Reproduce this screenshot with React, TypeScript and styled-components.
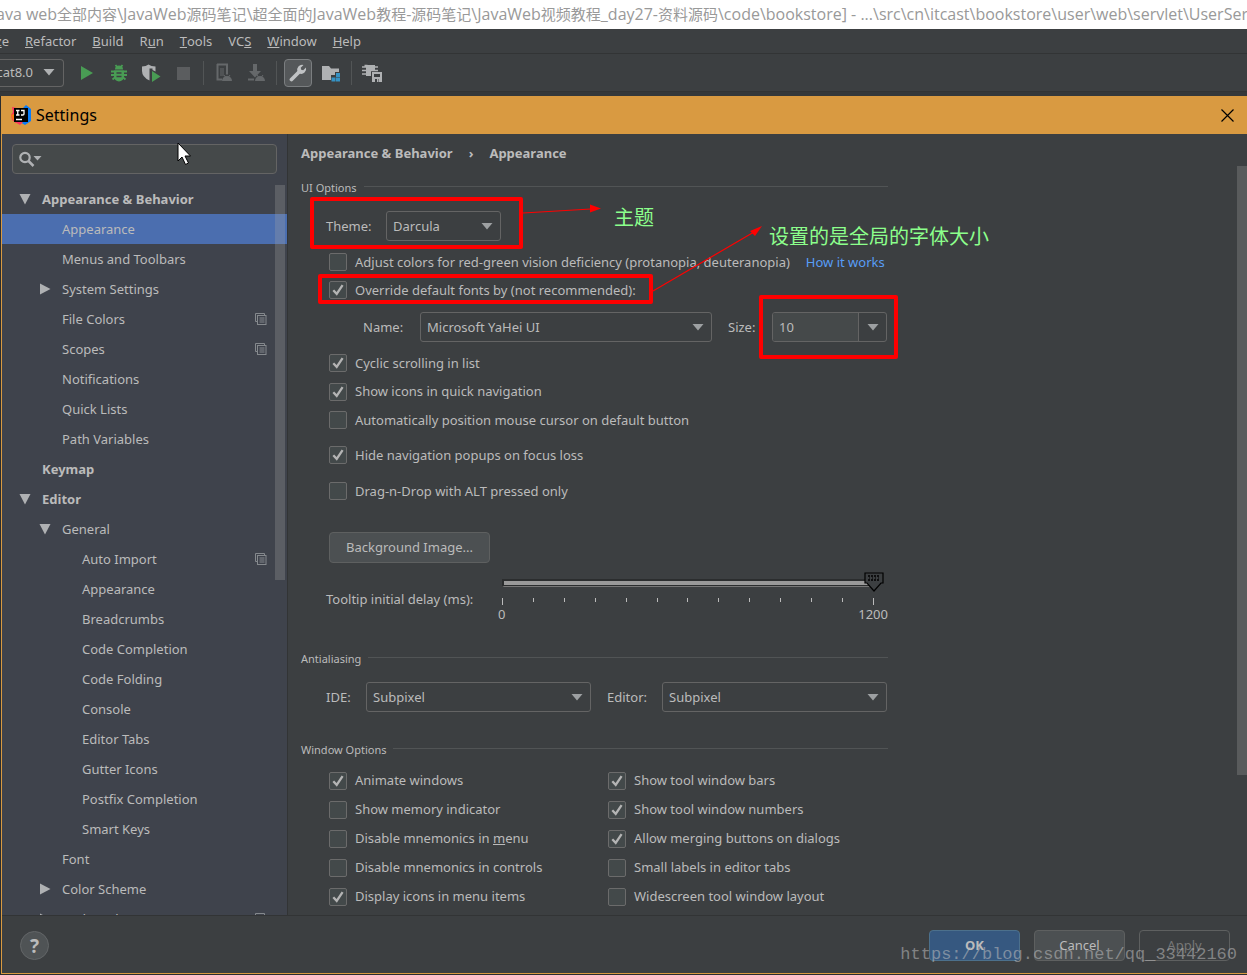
import React, { useState } from 'react';
import styled, { createGlobalStyle, css } from 'styled-components';

const c = {
  panel: '#3c3f41',
  side: '#3f434c',
  line: '#323435',
  text: '#bbbbbb',
  border: '#646464',
  field: '#45494a',
  select: '#4b6eaf',
  orange: '#d99a41',
  icon: '#afb1b3',
  dim: '#5b5d5f',
  green: '#499c54',
};

const Global = createGlobalStyle`
  * { box-sizing: border-box; }
  html, body { margin: 0; padding: 0; background: #2b2d2e; }
  body, button, input, select {
    font-family: "Noto Sans", "Noto Sans CJK SC", sans-serif;
    font-size: 13px;
    line-height: 19px;
    color: ${c.text};
  }
`;

const Screen = styled.div`
  position: relative;
  display: flex;
  flex-direction: column;
  height: 100vh;
  overflow: hidden;
`;

const WindowTitle = styled.div`
  flex: none;
  height: 29px;
  overflow: hidden;
  background: #fff;
  color: #999;
  font-family: "Open Sans", "Noto Sans CJK SC", sans-serif;
  font-size: 16px;
  line-height: 29px;
  text-indent: -4px;
  white-space: nowrap;
`;

const Han = styled.span`
  font-size: 15px;
`;

const MenuBar = styled.nav`
  flex: none;
  display: flex;
  align-items: center;
  gap: 16px;
  height: 24px;
  background: ${c.panel};
`;

const MenuItem = styled.button<{ $cut?: boolean }>`
  display: flex;
  padding: 0;
  border: 0;
  background: none;
  ${p => p.$cut && css`
    width: 9px;
    justify-content: flex-end;
    overflow: hidden;
  `}
`;

const ToolBar = styled.div`
  flex: none;
  display: flex;
  align-items: center;
  height: 39px;
  border-top: 1px solid ${c.line};
  border-bottom: 1px solid ${c.line};
  background: ${c.panel};
`;

const RunConfig = styled.button`
  display: flex;
  align-items: center;
  justify-content: flex-end;
  gap: 10px;
  width: 64px;
  height: 28px;
  margin-right: 7px;
  padding: 0 8px 0 0;
  border: 1px solid ${c.border};
  border-left: 0;
  border-radius: 0 4px 4px 0;
  background: none;
  overflow: hidden;
  svg { flex: none; }
`;

const Tool = styled.button<{ $on?: boolean }>`
  display: grid;
  place-items: center;
  flex: none;
  width: ${p => (p.$on ? 28 : 20)}px;
  height: 28px;
  margin: 0 ${p => (p.$on ? 3 : 6)}px;
  padding: 0;
  border: ${p => (p.$on ? '1px solid #7b7e80' : '0')};
  border-radius: 4px;
  background: ${p => (p.$on ? '#55585a' : 'none')};
`;

const Separator = styled.span`
  flex: none;
  width: 1px;
  height: 24px;
  margin: 0 4px;
  background: #525556;
`;

const TabStrip = styled.div`
  flex: none;
  height: 4px;
  background: #35383a;
`;

const Dialog = styled.section`
  position: relative;
  flex: 1;
  min-height: 0;
  display: flex;
  flex-direction: column;
  margin: 0 0 1px 1px;
  border: solid ${c.orange};
  border-width: 0 0 1px 1px;
  background: ${c.panel};
`;

const DialogTitle = styled.header`
  flex: none;
  display: flex;
  align-items: center;
  gap: 4px;
  height: 38px;
  padding: 0 13px 0 9px;
  background: ${c.orange};
  color: #000;
`;

const DialogName = styled.h1`
  flex: 1;
  margin: 0;
  font-size: 16px;
  line-height: 24px;
  font-weight: 400;
`;

const PlainButton = styled.button`
  display: grid;
  place-items: center;
  padding: 0;
  border: 0;
  background: none;
`;

const DialogBody = styled.div`
  flex: 1;
  min-height: 0;
  display: flex;
`;

const Sidebar = styled.aside`
  position: relative;
  flex: none;
  display: flex;
  flex-direction: column;
  width: 286px;
  overflow: hidden;
  border-right: 1px solid ${c.line};
  background: ${c.side};
`;

const Search = styled.label`
  flex: none;
  display: flex;
  align-items: center;
  height: 30px;
  margin: 10px;
  padding: 0 6px;
  border: 1px solid ${c.border};
  border-radius: 4px;
  background: ${c.field};
`;

const SearchInput = styled.input`
  flex: 1;
  min-width: 0;
  border: 0;
  outline: 0;
  background: none;
`;

const Tree = styled.ul`
  position: relative;
  flex: 1;
  min-height: 0;
  margin: 0;
  padding: 0;
  overflow: hidden;
  list-style: none;
`;

const TreeRow = styled.li<{ $level: number; $selected?: boolean; $bold?: boolean }>`
  display: flex;
  align-items: center;
  height: 30px;
  padding: 0 20px 0 ${p => 15 + p.$level * 20}px;
  background: ${p => (p.$selected ? c.select : 'none')};
  font-weight: ${p => (p.$bold ? 700 : 400)};
`;

const Twisty = styled.span`
  display: flex;
  width: 25px;
  padding-left: 2px;
`;

const TreeLabel = styled.span`
  flex: 1;
`;

const ScrollThumb = styled.span<{ $top: number; $height: number; $right: number }>`
  position: absolute;
  top: ${p => p.$top}px;
  right: ${p => p.$right}px;
  width: 10px;
  height: ${p => p.$height}%;
  background: rgba(166, 166, 166, 0.28);
`;

const Content = styled.main`
  position: relative;
  flex: 1;
  min-width: 0;
  overflow: hidden;
  padding-left: 13px;
`;

const Form = styled.div`
  max-width: 587px;
`;

const Breadcrumb = styled.div`
  display: flex;
  align-items: center;
  gap: 16px;
  height: 38px;
  font-weight: 700;
`;

const SectionTitle = styled.h2<{ $gap: number }>`
  display: flex;
  align-items: center;
  gap: 7px;
  margin: ${p => p.$gap}px 0 0;
  font-size: 11px;
  line-height: 20px;
  font-weight: 400;
  &::after {
    content: "";
    flex: 1;
    height: 1px;
    margin-bottom: 3px;
    background: #515455;
  }
`;

const Row = styled.div<{ $gap?: number; $indent?: number }>`
  display: flex;
  align-items: center;
  margin-top: ${p => p.$gap ?? 0}px;
  padding-left: ${p => p.$indent ?? 25}px;
`;

const FieldLabel = styled.label<{ $width: number }>`
  flex: none;
  width: ${p => p.$width}px;
  white-space: nowrap;
`;

const SelectBox = styled.span<{ $width: number }>`
  position: relative;
  flex: none;
  width: ${p => p.$width}px;
  svg {
    position: absolute;
    top: 12px;
    right: 8px;
    pointer-events: none;
  }
`;

const NativeSelect = styled.select`
  display: block;
  width: 100%;
  height: 30px;
  padding: 0 6px;
  appearance: none;
  border: 1px solid ${c.border};
  border-radius: 3px;
  background: ${c.panel};
`;

const SizeBox = styled.span`
  display: flex;
  width: 115px;
  height: 30px;
  border: 1px solid ${c.border};
  border-radius: 3px;
  overflow: hidden;
`;

const SizeInput = styled.input`
  flex: 1;
  min-width: 0;
  padding: 0 6px;
  border: 0;
  outline: 0;
  background: ${c.field};
`;

const SizeButton = styled(PlainButton)`
  width: 28px;
  border-left: 1px solid ${c.border};
`;

const CheckLabel = styled.label<{ $gap?: number; $tall?: boolean }>`
  display: flex;
  align-items: center;
  gap: 8px;
  height: ${p => (p.$tall ? 29 : 28)}px;
  margin-top: ${p => p.$gap ?? 0}px;
  white-space: nowrap;
`;

const CheckCell = styled.span`
  display: grid;
  place-items: center;
  flex: none;
  > * { grid-area: 1 / 1; }
  svg { pointer-events: none; }
`;

const CheckInput = styled.input`
  appearance: none;
  width: 18px;
  height: 18px;
  margin: 0;
  border: 1px solid #6b6b6b;
  border-radius: 2px;
  background: #43494a;
`;

const Checks = styled.div`
  padding-left: 28px;
`;

const CheckGrid = styled.div`
  display: grid;
  grid-template-columns: 279px 1fr;
  margin-top: 6px;
  padding-left: 28px;
`;

const Link = styled.a`
  margin-left: 16px;
  color: #589df6;
  text-decoration: none;
  white-space: nowrap;
`;

const PushButton = styled.button<{ $kind?: 'primary' | 'disabled'; $wide?: boolean }>`
  flex: none;
  width: ${p => (p.$wide ? 161 : 91)}px;
  height: 31px;
  padding: 0;
  border: 1px solid #5e6060;
  border-radius: 4px;
  background: #4c5052;
  ${p => p.$kind === 'primary' && css`
    border-color: #4c708c;
    background: #365880;
    font-weight: 700;
  `}
  ${p => p.$kind === 'disabled' && css`
    background: none;
    color: #777;
  `}
`;

const SliderBox = styled.div`
  position: relative;
  flex: 1;
  height: 58px;
  padding: 9px 14px 0 0;
`;

const Track = styled.div`
  height: 8px;
  border: 2px solid #2b2d2e;
  border-right: 0;
  border-bottom: 1px solid #777;
  background: #999;
  box-shadow: inset 0 -1px 0 #2b2d2e;
`;

const Thumb = styled.svg`
  position: absolute;
  top: 2px;
  right: 4px;
`;

const Range = styled.input`
  position: absolute;
  top: 0;
  left: 0;
  width: 100%;
  height: 22px;
  margin: 0;
  opacity: 0;
`;

const Ticks = styled.div`
  display: flex;
  justify-content: space-between;
  margin-top: 11px;
  height: 7px;
`;

const Tick = styled.span<{ $major: boolean }>`
  width: 1px;
  height: ${p => (p.$major ? 7 : 4)}px;
  background: #bbb;
`;

const Scale = styled.div`
  display: flex;
  justify-content: space-between;
  margin: 0 -14px 0 -4px;
`;

const Footer = styled.footer`
  flex: none;
  display: flex;
  align-items: center;
  gap: 14px;
  height: 58px;
  padding: 2px 17px 0 18px;
  border-top: 1px solid ${c.line};
`;

const Help = styled.button`
  width: 29px;
  height: 29px;
  margin-right: auto;
  padding: 0;
  border: 1px solid #636668;
  border-radius: 50%;
  background: #4f5355;
  font-size: 19px;
  line-height: 24px;
  font-weight: 700;
`;

const Marks = styled.svg`
  position: absolute;
  top: 0;
  left: 0;
  pointer-events: none;
`;

const Note = styled.span<{ $x: number; $y: number }>`
  position: absolute;
  left: ${p => p.$x}px;
  top: ${p => p.$y}px;
  color: #8cff8c;
  font-family: "Noto Sans CJK SC", sans-serif;
  font-size: 20px;
  line-height: 28px;
  white-space: nowrap;
`;

const Pointer = styled.svg`
  position: absolute;
  top: 8px;
  left: 175px;
  pointer-events: none;
`;

const Watermark = styled.span`
  position: absolute;
  right: 10px;
  bottom: 8px;
  color: rgba(190, 190, 190, 0.55);
  font-family: "Liberation Mono", monospace;
  font-size: 17px;
  line-height: 24px;
  pointer-events: none;
`;

const Down = ({ fill = '#9da0a2' }: { fill?: string }) => (
  <svg width="12" height="7" viewBox="0 0 12 7"><path d="M0.5 0h11L6 6.5z" fill={fill} /></svg>
);

const TwistyIcon = ({ open }: { open: boolean }) => (
  <svg width="12" height="12" viewBox="0 0 12 12">
    <path d={open ? 'M0.500 1h11L6 11.500z' : 'M1 0.500v11L11.500 6z'} fill="#afb1b3" />
  </svg>
);

const CopyIcon = () => (
  <svg width="12" height="12" viewBox="0 0 12 12" fill="none" stroke="#85898d">
    <path d="M9.500 2.500V0.500H0.500v8h2" />
    <rect x="2.500" y="2.500" width="8.500" height="9" />
    <path d="M4.500 5h5M4.500 7h5M4.500 9h5" />
  </svg>
);

const Combo = ({ id, value, width }: { id: string; value: string; width: number }) => (
  <SelectBox $width={width}>
    <NativeSelect id={id} defaultValue={value}><option>{value}</option></NativeSelect>
    <Down />
  </SelectBox>
);

type CheckProps = { label: React.ReactNode; on?: boolean; gap?: number; tall?: boolean };
const Check = ({ label, on = false, gap, tall }: CheckProps) => {
  const [checked, setChecked] = useState(on);
  return (
    <CheckLabel $gap={gap} $tall={tall}>
      <CheckCell>
        <CheckInput type="checkbox" checked={checked} onChange={e => setChecked(e.target.checked)} />
        {checked && (
          <svg width="12" height="12" viewBox="0 0 12 12">
            <path d="M1.300 6.200L4.700 9.800L10.600 1.200" fill="none" stroke="#b4b4b4" strokeWidth="2.300" />
          </svg>
        )}
      </CheckCell>
      <span>{label}</span>
    </CheckLabel>
  );
};

type Node = { name: string; level: number; open?: boolean; bold?: boolean; copy?: boolean; selected?: boolean };
const nodes: Node[] = [
  { name: 'Appearance & Behavior', level: 0, open: true, bold: true },
  { name: 'Appearance', level: 1, selected: true },
  { name: 'Menus and Toolbars', level: 1 },
  { name: 'System Settings', level: 1, open: false },
  { name: 'File Colors', level: 1, copy: true },
  { name: 'Scopes', level: 1, copy: true },
  { name: 'Notifications', level: 1 },
  { name: 'Quick Lists', level: 1 },
  { name: 'Path Variables', level: 1 },
  { name: 'Keymap', level: 0, bold: true },
  { name: 'Editor', level: 0, open: true, bold: true },
  { name: 'General', level: 1, open: true },
  { name: 'Auto Import', level: 2, copy: true },
  { name: 'Appearance', level: 2 },
  { name: 'Breadcrumbs', level: 2 },
  { name: 'Code Completion', level: 2 },
  { name: 'Code Folding', level: 2 },
  { name: 'Console', level: 2 },
  { name: 'Editor Tabs', level: 2 },
  { name: 'Gutter Icons', level: 2 },
  { name: 'Postfix Completion', level: 2 },
  { name: 'Smart Keys', level: 2 },
  { name: 'Font', level: 1 },
  { name: 'Color Scheme', level: 1, open: false },
  { name: 'Code Style', level: 1, open: false, copy: true },
];

const windowChecks: CheckProps[] = [
  { label: 'Animate windows', on: true },
  { label: 'Show tool window bars', on: true },
  { label: 'Show memory indicator' },
  { label: 'Show tool window numbers', on: true },
  { label: <>Disable mnemonics in <u>m</u>enu</> },
  { label: 'Allow merging buttons on dialogs', on: true },
  { label: 'Disable mnemonics in controls' },
  { label: 'Small labels in editor tabs' },
  { label: 'Display icons in menu items', on: true },
  { label: 'Widescreen tool window layout' },
];

const Bug = ({ fill }: { fill: string }) => (
  <svg width="18" height="18" viewBox="0 0 18 18">
    <path d="M5 5.500a4 4 0 0 1 8 0z" fill={fill} />
    <path d="M5.500 1l2 2.500M12.500 1l-2 2.500M1 7.500h16M1 11h16M2.500 15.500l3-2.500M15.500 15.500l-3-2.500" stroke={fill} strokeWidth="1.800" />
    <path d="M4 6.500h10v6a5 5 0 0 1-10 0z" fill={fill} />
    <path d="M6.500 9h5M6.500 12.500h5" stroke={c.panel} strokeWidth="1.300" />
  </svg>
);

const Android = ({ x }: { x: number }) => (
  <g transform={`translate(${x} 12)`}>
    <path d="M0 6a5 5 0 0 1 10 0z" fill="#65686a" />
    <path d="M2 0l1.500 2M8 0L6.500 2" stroke="#65686a" />
  </g>
);

const projectPath = 'ava web全部内容\\JavaWeb源码笔记\\超全面的JavaWeb教程-源码笔记\\JavaWeb视频教程_day27-资料源码\\code\\bookstore] - ...\\src\\cn\\itcast\\bookstore\\user\\web\\servlet\\UserServlet';

export default function App() {
  return (
    <>
      <Global />
      <Screen>
        <WindowTitle>
          {projectPath.split(/([\u4e00-\u9fff]+)/).map((part, i) => (i % 2 ? <Han key={i}>{part}</Han> : part))}
        </WindowTitle>
        <MenuBar>
          <MenuItem $cut>Analy<u>z</u>e</MenuItem>
          <MenuItem><u>R</u>efactor</MenuItem>
          <MenuItem><u>B</u>uild</MenuItem>
          <MenuItem>R<u>u</u>n</MenuItem>
          <MenuItem><u>T</u>ools</MenuItem>
          <MenuItem>VC<u>S</u></MenuItem>
          <MenuItem><u>W</u>indow</MenuItem>
          <MenuItem><u>H</u>elp</MenuItem>
        </MenuBar>
        <ToolBar>
          <RunConfig>Tomcat8.0<Down fill={c.icon} /></RunConfig>
          <Tool aria-label="Run"><svg width="14" height="16" viewBox="0 0 14 16"><path d="M1 1l12 7L1 15z" fill={c.green} /></svg></Tool>
          <Tool aria-label="Debug"><Bug fill={c.green} /></Tool>
          <Tool aria-label="Run with coverage">
            <svg width="20" height="18" viewBox="0 0 20 18">
              <path d="M1 2.500Q5 2.500 7.500 0.500Q10 2.500 14.500 2.500V7.500L11.500 6V4.500H8.500V16.500Q1 13 1 7z" fill={c.icon} />
              <path d="M11 7l8.500 5.500L11 18z" fill={c.green} />
            </svg>
          </Tool>
          <Tool aria-label="Stop"><svg width="14" height="14"><rect width="13" height="13" x="1" y="1" fill={c.dim} /></svg></Tool>
          <Separator />
          <Tool aria-label="Device manager">
            <svg width="18" height="20" viewBox="0 0 18 20">
              <path d="M2 1.500h10v10M2.500 1v15.500H7" fill="none" stroke="#65686a" strokeWidth="2" />
              <path d="M5 5h4v8H5z" fill="#505355" />
              <Android x={7} />
            </svg>
          </Tool>
          <Tool aria-label="SDK manager">
            <svg width="18" height="20" viewBox="0 0 18 20">
              <path d="M6 1h4v7h4l-6 6.500L2 8h4z" fill="#65686a" />
              <path d="M1 16.500h6" stroke="#65686a" strokeWidth="2" />
              <Android x={8} />
            </svg>
          </Tool>
          <Separator />
          <Tool $on aria-label="Settings">
            <svg width="18" height="18" viewBox="0 0 18 18">
              <path d="M2.500 15.500L10 8" stroke="#c0c2c4" strokeWidth="3.800" strokeLinecap="round" />
              <path d="M14.500 1L11.700 3.800L12.200 5.800L14.200 6.300L17 3.500A5 5 0 0 1 10.300 9.500L8.500 7.700A5 5 0 0 1 14.500 1z" fill="#c0c2c4" />
            </svg>
          </Tool>
          <Tool aria-label="Project structure">
            <svg width="20" height="18" viewBox="0 0 20 18">
              <path d="M1 2h7l2 2.500h8V8h-4v3h-4v5H1z" fill={c.icon} />
              <path d="M15 9h4v4h-4zM10.500 13.500h4v4h-4zM15 13.500h4v4h-4z" fill="#3592c4" />
            </svg>
          </Tool>
          <Separator />
          <Tool aria-label="Save device state">
            <svg width="20" height="20" viewBox="0 0 20 20">
              <path d="M4 2h9v6H9v5H4z" fill={c.icon} />
              <path d="M0 4h16M0 7.500h16M0 11h8M2.500 2.500h3" stroke={c.icon} strokeWidth="1.400" />
              <path d="M10 9h10v10H10z" fill={c.icon} />
              <path d="M12 11h6v3h-6zM13 16h4v3h-4z" fill={c.panel} />
              <path d="M15 16h1.500v3H15z" fill={c.icon} />
            </svg>
          </Tool>
        </ToolBar>
        <TabStrip />
        <Dialog>
          <DialogTitle>
            <svg width="21" height="20" viewBox="0 0 21 20">
              <path d="M1 2l5 1 3 7-4 8-4-3-1-5 2-3z" fill="#fe315d" />
              <path d="M0 10l5-2v8l-3-1z" fill="#f97a12" />
              <path d="M12 3l3-3 5 4v12l-6 4-5-3z" fill="#087cfa" />
              <path d="M4 17l5 3 3-3z" fill="#fe315d" />
              <rect x="3" y="3" width="14" height="14" fill="#000" />
              <path d="M5 5.500h3.500M6.750 5.500V10M5 10h3.500M10 5.500h3V9q0 1-1.300 1H10M5 14.500h6" fill="none" stroke="#fff" strokeWidth="1.300" />
            </svg>
            <DialogName>Settings</DialogName>
            <PlainButton aria-label="Close">
              <svg width="13" height="13" viewBox="0 0 13 13"><path d="M0.500 0.500l12 12M12.500 0.500l-12 12" stroke="#000" strokeWidth="1.200" /></svg>
            </PlainButton>
          </DialogTitle>
          <DialogBody>
            <Sidebar>
              <Search>
                <svg width="24" height="18" viewBox="0 0 24 18">
                  <circle cx="6" cy="7.500" r="4.700" fill="none" stroke={c.icon} strokeWidth="2.200" />
                  <path d="M9.500 11l5 5" stroke={c.icon} strokeWidth="2.500" />
                  <path d="M14.500 6h8l-4 4.500z" fill={c.icon} />
                </svg>
                <SearchInput aria-label="Search settings" />
              </Search>
              <Tree>
                {nodes.map((n, i) => (
                  <TreeRow key={i} $level={n.level} $selected={n.selected} $bold={n.bold}>
                    <Twisty>{n.open !== undefined && <TwistyIcon open={n.open} />}</Twisty>
                    <TreeLabel>{n.name}</TreeLabel>
                    {n.copy && <CopyIcon />}
                  </TreeRow>
                ))}
                <ScrollThumb $top={1} $height={54} $right={2} />
              </Tree>
              <Pointer width="14" height="24" viewBox="0 0 14 24">
                <path d="M1 1v18l4-4 3.500 7.500 3-1.500L8 14h5.500z" fill="#fff" stroke="#000" />
              </Pointer>
            </Sidebar>
            <Content>
              <Form>
                <Breadcrumb><span>Appearance &amp; Behavior</span><span>›</span><span>Appearance</span></Breadcrumb>
                <SectionTitle $gap={6}>UI Options</SectionTitle>
                <Row $gap={13}>
                  <FieldLabel $width={60} htmlFor="theme">Theme:</FieldLabel>
                  <Combo id="theme" value="Darcula" width={115} />
                </Row>
                <Row $gap={7} $indent={28}>
                  <Check label="Adjust colors for red-green vision deficiency (protanopia, deuteranopia)" />
                  <Link href="#how">How it works</Link>
                </Row>
                <Checks><Check on label="Override default fonts by (not recommended):" /></Checks>
                <Row $gap={8} $indent={62}>
                  <FieldLabel $width={57} htmlFor="font">Name:</FieldLabel>
                  <Combo id="font" value="Microsoft YaHei UI" width={292} />
                  <Row $indent={16}>
                    <FieldLabel $width={44} htmlFor="size">Size:</FieldLabel>
                    <SizeBox>
                      <SizeInput id="size" defaultValue="10" />
                      <SizeButton aria-label="Choose size"><Down /></SizeButton>
                    </SizeBox>
                  </Row>
                </Row>
                <Checks>
                  <Check on gap={7} label="Cyclic scrolling in list" />
                  <Check on tall label="Show icons in quick navigation" />
                  <Check label="Automatically position mouse cursor on default button" />
                  <Check on gap={7} label="Hide navigation popups on focus loss" />
                  <Check gap={8} label="Drag-n-Drop with ALT pressed only" />
                </Checks>
                <Row $gap={27} $indent={28}><PushButton $wide>Background Image...</PushButton></Row>
                <Row $gap={7}>
                  <FieldLabel $width={176} htmlFor="delay">Tooltip initial delay (ms):</FieldLabel>
                  <SliderBox>
                    <Track />
                    <Ticks>
                      {Array.from({ length: 13 }, (_, i) => <Tick key={i} $major={i % 12 === 0} />)}
                    </Ticks>
                    <Scale><span>0</span><span>1200</span></Scale>
                    <Thumb width="20" height="20" viewBox="0 0 20 20">
                      <path d="M1 1h18v10h-2l-7 8-7-8H1z" fill={c.panel} stroke="#000" strokeWidth="1.200" />
                      <path d="M4 4h12M4 8h12" stroke="#000" strokeWidth="1.600" strokeDasharray="2 1" />
                      <path d="M5 6h10" stroke="#000" strokeDasharray="1 2" />
                    </Thumb>
                    <Range id="delay" type="range" min="0" max="1200" defaultValue="1200" />
                  </SliderBox>
                </Row>
                <SectionTitle $gap={21}>Antialiasing</SectionTitle>
                <Row $gap={13}>
                  <FieldLabel $width={40} htmlFor="ide">IDE:</FieldLabel>
                  <Combo id="ide" value="Subpixel" width={225} />
                  <Row $indent={16}>
                    <FieldLabel $width={55} htmlFor="editor">Editor:</FieldLabel>
                    <Combo id="editor" value="Subpixel" width={225} />
                  </Row>
                </Row>
                <SectionTitle $gap={28}>Window Options</SectionTitle>
                <CheckGrid>
                  {windowChecks.map((w, i) => <Check key={i} tall {...w} />)}
                </CheckGrid>
              </Form>
              <ScrollThumb $top={32} $height={78} $right={0} />
              <Marks width="620" height="240" viewBox="0 0 620 240" fill="none" stroke="#f00">
                <g strokeWidth="4" strokeLinejoin="round">
                  <rect x="24" y="65" width="209" height="48" />
                  <rect x="32" y="142" width="331" height="26" />
                  <rect x="473" y="163" width="135" height="60" />
                </g>
                <path d="M235 79L303 75M365 157L466 98" strokeWidth="1.200" />
                <path d="M302 70.500l11 4-11 4zM462 97l12-5-7 10z" fill="#f00" stroke="none" />
              </Marks>
              <Note $x={326} $y={69}>主题</Note>
              <Note $x={481} $y={88}>设置的是全局的字体大小</Note>
            </Content>
          </DialogBody>
          <Footer>
            <Help>?</Help>
            <PushButton $kind="primary">OK</PushButton>
            <PushButton>Cancel</PushButton>
            <PushButton $kind="disabled" disabled>Apply</PushButton>
          </Footer>
        </Dialog>
        <Watermark>https://blog.csdn.net/qq_33442160</Watermark>
      </Screen>
    </>
  );
}
